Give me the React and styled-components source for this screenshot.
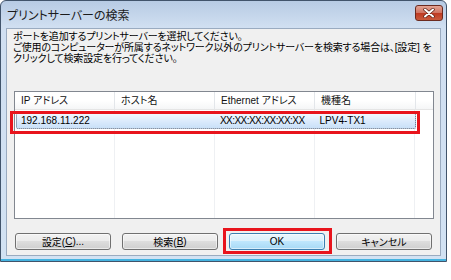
import React from 'react';
import styled, { createGlobalStyle } from 'styled-components';

const Global = createGlobalStyle`
  html, body { margin: 0; padding: 0; background: #fff; }
  body {
    font-family: "Liberation Sans", "Noto Sans CJK JP", sans-serif;
    font-feature-settings: "palt";
    color: #000;
  }
`;

const Window = styled.div`
  width: 447px;
  height: 262px;
  box-sizing: border-box;
  border: 1px solid #41546b;
  border-radius: 6px 6px 0 0;
  background: linear-gradient(#b7cbe4, #d0dff1 26px, #d2e2f3);
  box-shadow: inset 0 -2px 0 #45b3e0;
  display: flex;
  flex-direction: column;
  padding: 0 5px 5px;
`;

const TitleBar = styled.div`
  height: 27px;
  display: flex;
  align-items: center;
  justify-content: space-between;
  padding: 0 0 0 1px;
`;

const Title = styled.div`
  font-size: 12px;
  color: #1b1b1b;
`;

const CloseBtn = styled.div`
  width: 28px;
  height: 16px;
  margin-top: -3px;
  margin-right: -2px;
  box-sizing: border-box;
  border: 1px solid #6b2a1f;
  border-radius: 3px;
  background: linear-gradient(#e4a494, #d07563 48%, #bf3a22 52%, #c95a3c);
  display: flex;
  align-items: center;
  justify-content: center;
`;

const Body = styled.div`
  flex: 1;
  background: #f0f0f0;
  border: 1px solid #9aabc0;
  display: flex;
  flex-direction: column;
  padding: 2px 7px 0 6px;
`;

const Message = styled.p`
  margin: 0;
  font-size: 10px;
  line-height: 11px;
  letter-spacing: -0.15px;
  white-space: nowrap;
`;

const List = styled.div`
  position: relative;
  margin: 27px 0 0 1px;
  width: 420px;
  height: 128px;
  box-sizing: border-box;
  border: 1px solid #828790;
  background: #fff;
  display: flex;
  flex-direction: column;
`;

const HeaderRow = styled.div`
  display: flex;
  height: 17px;
  background: linear-gradient(#ffffff, #ffffff 50%, #f5f6f7);
  border-bottom: 1px solid #e5e5e5;
`;

const HeaderCell = styled.div`
  width: ${p => p.$w}px;
  flex: ${p => (p.$grow ? 1 : 'none')};
  box-sizing: border-box;
  border-right: ${p => (p.$grow ? 'none' : '1px solid #e3e6ea')};
  font-size: 10px;
  line-height: 17px;
  padding-left: 6px;
  color: #111;
  white-space: nowrap;
`;

const ListBody = styled.div`
  flex: 1;
  padding-top: 3px;
  background-image: repeating-linear-gradient(to right, transparent 0 99px, #eef0f3 99px 100px);
`;

const Row = styled.div`
  display: flex;
  width: 400px;
  height: 16px;
  margin-left: 1px;
  box-sizing: border-box;
  border: 1px dotted #4d5f7a;
  border-radius: 2px;
  background: linear-gradient(#f2f8fe, #dcebfc 50%, #c9e0f8);
`;

const Cell = styled.div`
  width: ${p => p.$w}px;
  box-sizing: border-box;
  padding-left: 4px;
  font-size: 10px;
  line-height: 14px;
  letter-spacing: ${p => (p.$tight ? '-0.55px' : '0')};
  white-space: nowrap;
  overflow: hidden;
`;

const RedBox = styled.div`
  position: absolute;
  left: ${p => p.$l}px;
  top: ${p => p.$t}px;
  width: ${p => p.$w}px;
  height: ${p => p.$h}px;
  box-sizing: border-box;
  border: 3px solid #e8141c;
  pointer-events: none;
`;

const ButtonRow = styled.div`
  display: flex;
  justify-content: space-between;
  margin-top: 14px;
  padding: 0 1px 0 2px;
`;

const BtnWrap = styled.div`
  position: relative;
`;

const Button = styled.div`
  width: 96px;
  height: 17px;
  box-sizing: border-box;
  border: 1px solid ${p => (p.$default ? '#3c7fb1' : '#707070')};
  border-radius: 3px;
  background: ${p =>
    p.$default
      ? 'linear-gradient(#eaf6fd, #d9f0fc 50%, #bee6fd 50%, #a7d9f5)'
      : 'linear-gradient(#f2f2f2, #ebebeb 50%, #dddddd 50%, #cfcfcf)'};
  box-shadow: inset 0 0 0 1px rgba(255,255,255,0.55);
  display: flex;
  align-items: center;
  justify-content: center;
  font-size: 10px;
  color: #000;
`;

const U = styled.span`
  text-decoration: underline;
`;

const cols = [100, 100, 100, 101];

export default function App() {
  return (
    <>
      <Global />
      <Window>
        <TitleBar>
          <Title>プリントサーバーの検索</Title>
          <CloseBtn>
            <svg width="12" height="10" viewBox="0 0 12 10">
              <path d="M2 1.5 L10 8.5 M10 1.5 L2 8.5" stroke="#5a1d12" strokeWidth="3.4" strokeLinecap="round" />
              <path d="M2 1.5 L10 8.5 M10 1.5 L2 8.5" stroke="#fff" strokeWidth="2" strokeLinecap="round" />
            </svg>
          </CloseBtn>
        </TitleBar>
        <Body>
          <Message>
            ポートを追加するプリントサーバーを選択してください。<br />
            ご使用のコンピューターが所属するネットワーク以外のプリントサーバーを検索する場合は、[設定] を<br />
            クリックして検索設定を行ってください。
          </Message>
          <List>
            <HeaderRow>
              <HeaderCell $w={cols[0]}>IP アドレス</HeaderCell>
              <HeaderCell $w={cols[1]}>ホスト名</HeaderCell>
              <HeaderCell $w={cols[2]}>Ethernet アドレス</HeaderCell>
              <HeaderCell $w={cols[3]}>機種名</HeaderCell>
              <HeaderCell $grow />
            </HeaderRow>
            <ListBody>
              <Row>
                <Cell $w={100}>192.168.11.222</Cell>
                <Cell $w={100}></Cell>
                <Cell $w={100} $tight>XX:XX:XX:XX:XX:XX</Cell>
                <Cell $w={100}>LPV4-TX1</Cell>
              </Row>
            </ListBody>
            <RedBox $l={-5} $t={19} $w={410} $h={23} />
          </List>
          <ButtonRow>
            <Button>設定(<U>C</U>)...</Button>
            <Button>検索(<U>B</U>)</Button>
            <BtnWrap>
              <Button $default>OK</Button>
              <RedBox $l={-6} $t={-5} $w={109} $h={26} />
            </BtnWrap>
            <Button>キャンセル</Button>
          </ButtonRow>
        </Body>
      </Window>
    </>
  );
}
